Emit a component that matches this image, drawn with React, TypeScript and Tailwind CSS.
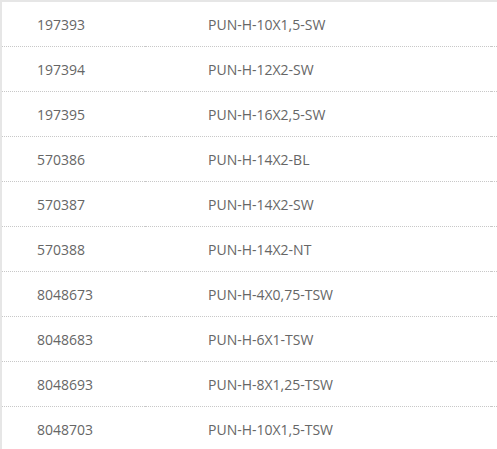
import React from "react";

const rows: [string, string][] = [
  ["197393", "PUN-H-10X1,5-SW"],
  ["197394", "PUN-H-12X2-SW"],
  ["197395", "PUN-H-16X2,5-SW"],
  ["570386", "PUN-H-14X2-BL"],
  ["570387", "PUN-H-14X2-SW"],
  ["570388", "PUN-H-14X2-NT"],
  ["8048673", "PUN-H-4X0,75-TSW"],
  ["8048683", "PUN-H-6X1-TSW"],
  ["8048693", "PUN-H-8X1,25-TSW"],
  ["8048703", "PUN-H-10X1,5-TSW"],
];

export default function App() {
  return (
    <div
      className="w-[497px] h-[449px] overflow-hidden bg-white border-t-2 border-l-2 border-[#e6e6e6] text-[14px] text-[#666666]"
      style={{ fontFamily: '"Segoe UI", "Open Sans", "Noto Sans", sans-serif' }}
    >
      {rows.map(([a, b], i) => (
        <div key={i} className="flex h-[45px]">
          <div className="w-[143px] shrink-0 pl-[35px] pt-[1px] flex items-center border-b border-dotted border-[#c8c8c8]">
            {a}
          </div>
          <div className="w-[346px] shrink-0 pl-[63px] pt-[1px] flex items-center border-b border-dotted border-[#c8c8c8]">
            {b}
          </div>
          <div className="flex-1 border-b border-dotted border-[#c8c8c8]" />
        </div>
      ))}
    </div>
  );
}
